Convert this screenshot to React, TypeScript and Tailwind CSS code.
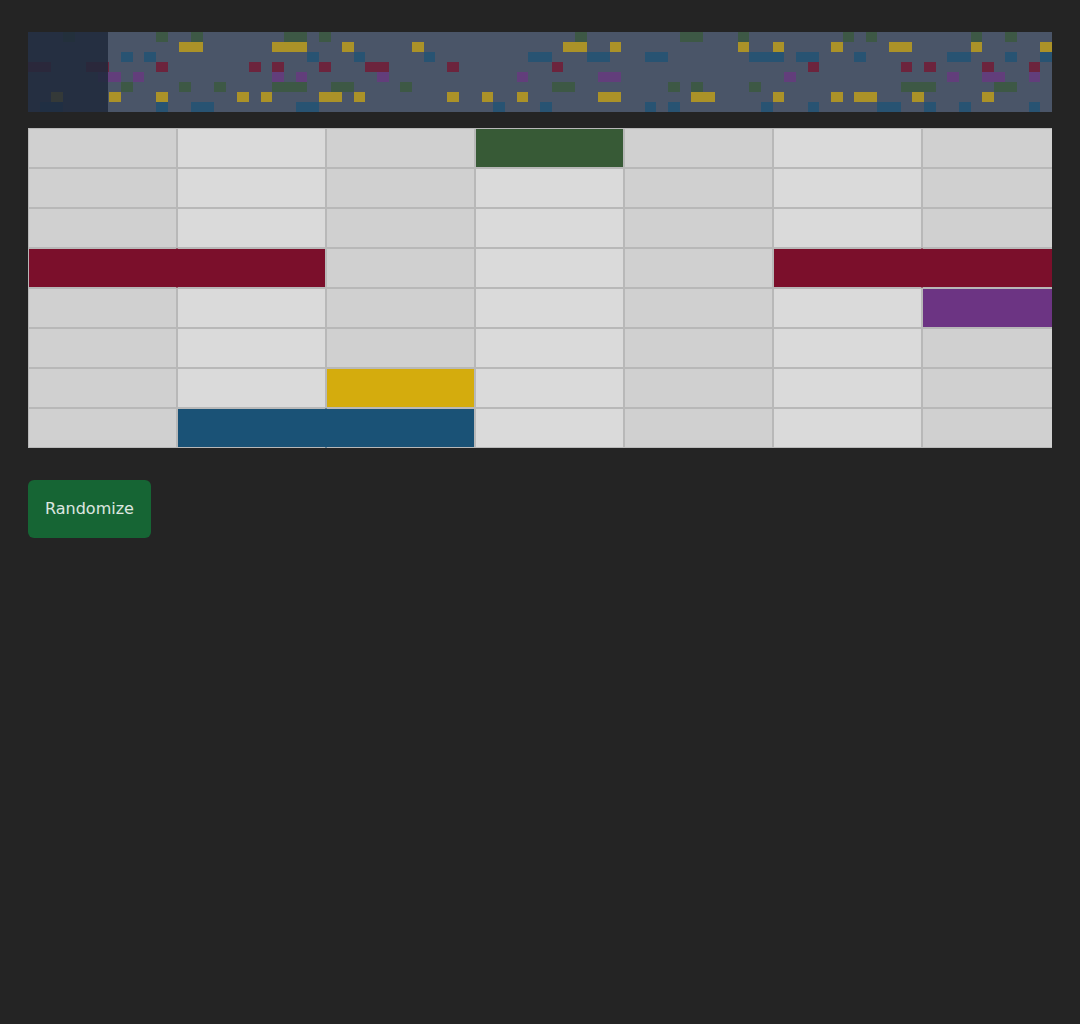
const COLS = 88;
const COLORS = ["#375a36", "#d4ac0d", "#1a5276", "#7b0f2b", "#6c3483", "#375a36", "#d4ac0d", "#1a5276"];
const NOTES: number[][] = [
  [3, 11, 14, 22, 23, 25, 47, 56, 57, 61, 70, 72, 81, 84],
  [13, 14, 21, 22, 23, 27, 33, 46, 47, 50, 61, 64, 69, 74, 75, 81, 87],
  [8, 10, 24, 28, 34, 43, 44, 48, 49, 53, 54, 62, 63, 64, 66, 67, 71, 79, 80, 84, 87],
  [0, 1, 5, 6, 11, 19, 21, 25, 29, 30, 36, 45, 67, 75, 77, 82, 86],
  [6, 7, 9, 21, 23, 30, 42, 49, 50, 65, 79, 82, 83, 86],
  [8, 13, 16, 21, 22, 23, 26, 27, 32, 45, 46, 55, 57, 62, 75, 76, 77, 83, 84],
  [2, 7, 11, 18, 20, 25, 26, 28, 36, 39, 42, 49, 50, 57, 58, 64, 69, 71, 72, 76, 82],
  [1, 2, 11, 14, 15, 23, 24, 40, 44, 53, 55, 63, 67, 73, 74, 77, 80, 86],
];

function Minimap() {
  return (
    <div className="relative h-20 w-full overflow-hidden bg-[#4a5568]">
      <div className="flex h-full flex-col">
        {NOTES.map((row, r) => (
          <div key={r} className="relative h-2.5 w-full">
            {row.map((c) => (
              <div
                key={c}
                className="absolute top-0 h-full opacity-70"
                style={{
                  left: `${(c / COLS) * 100}%`,
                  width: `${100 / COLS}%`,
                  backgroundColor: COLORS[r],
                }}
              />
            ))}
          </div>
        ))}
      </div>
      <div className="absolute left-0 top-0 h-full w-20 bg-[#1e293b]/85" />
    </div>
  );
}

function Grid() {
  return (
    <div className="mt-4 w-full overflow-hidden">
      <div className="flex w-max flex-col">
        {NOTES.map((row, r) => (
          <div key={r} className="flex h-10">
            {Array.from({ length: 7 }, (_, c) => {
              const on = row.includes(c);
              return (
                <div
                  key={c}
                  className={`box-border h-10 w-[149px] shrink-0 border border-[#b8b8b8] ${
                    c % 2 === 0 ? "bg-[#d0d0d0]" : "bg-[#dadada]"
                  }`}
                  style={
                    on
                      ? {
                          backgroundColor: COLORS[r],
                          borderLeftColor: row.includes(c - 1) ? "transparent" : undefined,
                          borderRightColor: row.includes(c + 1) ? "transparent" : undefined,
                        }
                      : undefined
                  }
                />
              );
            })}
          </div>
        ))}
      </div>
    </div>
  );
}

export default function App() {
  return (
    <div
      className="min-h-[1024px] bg-[#242424] p-7 pt-8"
      style={{ fontFamily: '"DejaVu Sans", sans-serif' }}
    >
      <Minimap />
      <Grid />
      <button className="mt-8 block h-[58px] rounded-md bg-[#166534] px-[17px] text-base text-white/85">
        Randomize
      </button>
    </div>
  );
}
